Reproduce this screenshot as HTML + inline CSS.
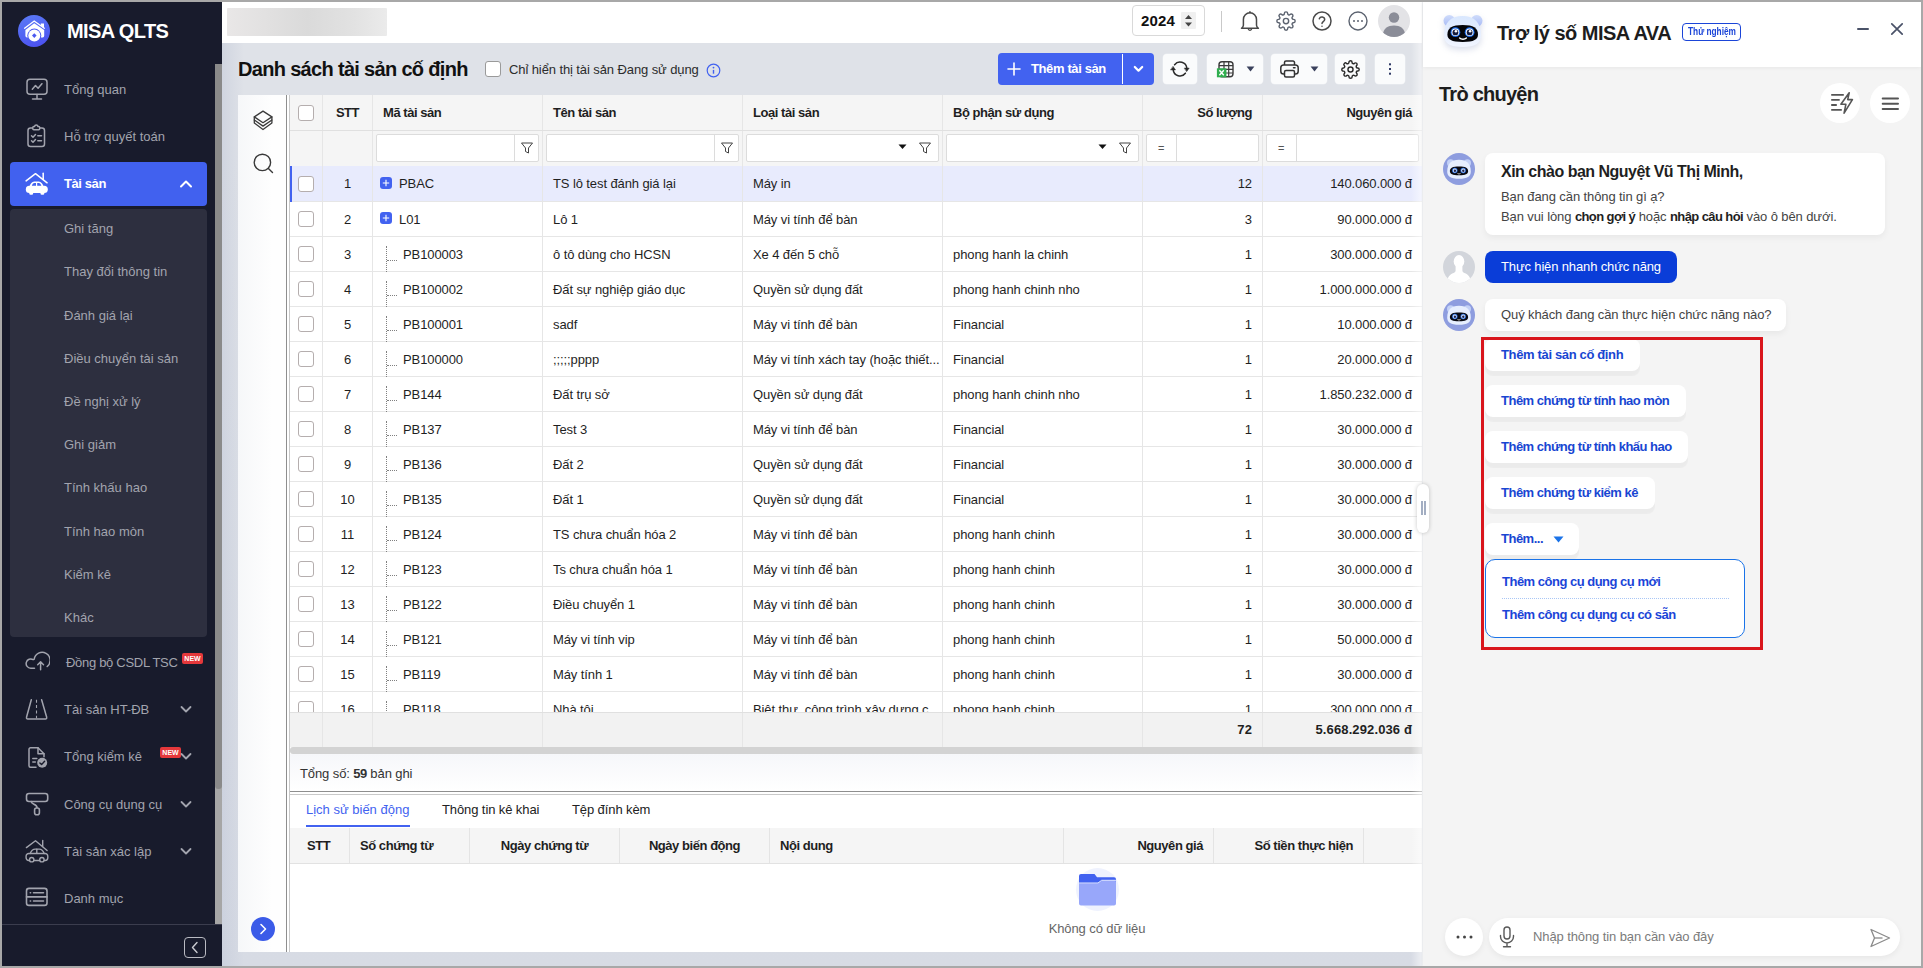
<!DOCTYPE html>
<html lang="vi">
<head>
<meta charset="utf-8">
<title>MISA QLTS - Danh sách tài sản cố định</title>
<style>
*{box-sizing:border-box;margin:0;padding:0}
html,body{width:1923px;height:968px;overflow:hidden;background:#a8a8a8}
body{font-family:"Liberation Sans",sans-serif;font-size:13px;color:#1f1f1f;position:relative;letter-spacing:-0.1px}
b,.bd{font-weight:bold;letter-spacing:-0.45px}
#app{position:absolute;left:2px;top:2px;width:1919px;height:964px;overflow:hidden;background:#dfe2e8}
.abs{position:absolute}
svg{display:block}
/* ---------- sidebar ---------- */
#sb{position:absolute;left:0;top:0;width:220px;height:964px;background:#181b2c}
#sb .logo{position:absolute;left:16px;top:13px;width:32px;height:32px;border-radius:50%;background:linear-gradient(160deg,#5b7cf6 0%,#4a4df0 100%)}
#sb .brand{position:absolute;left:65px;top:17px;font-size:20px;font-weight:bold;color:#fff;line-height:24px;letter-spacing:-0.6px}
#sb .mi{position:absolute;left:8px;width:197px;height:44px;border-radius:4px;color:#a2a4ae;font-size:13px;line-height:46px;letter-spacing:0}
#sb .mi .ic{position:absolute;left:14px;top:9px;width:26px;height:26px}
#sb .mi .tx{position:absolute;left:54px;top:0;white-space:nowrap}
#sb .mi .ar{position:absolute;left:169px;top:15px}
#sb .mi.act{background:#4161ef;color:#fff;font-weight:bold;letter-spacing:-0.4px;line-height:44px}
#sb .sub{position:absolute;left:8px;top:207px;width:197px;height:428px;background:#2d2f3f;border-radius:4px}
#sb .sub div{position:absolute;left:54px;color:#a2a4ae;font-size:13px;line-height:20px;white-space:nowrap;letter-spacing:0}
#sb .new{position:absolute;background:#e5383b;color:#fff;font-size:7px;font-weight:bold;line-height:11px;height:11px;width:21px;text-align:center;border-radius:2px;letter-spacing:0}
#sb .scr{position:absolute;left:213px;top:62px;width:7px;height:860px;background:#8a8a8a}
#sb .foot{position:absolute;left:0;top:920px;width:220px;height:44px;border-top:1px solid #3b3d4e}
/* ---------- top header ---------- */
#hd{position:absolute;left:220px;top:0;width:1200px;height:41px;background:#fff}
#hd .blur{position:absolute;left:5px;top:6px;width:160px;height:28px;background:linear-gradient(90deg,#e9e7e7,#dadada 50%,#e2e2e2 80%,#ebebeb);border-radius:1px}
#hd .yr{position:absolute;left:910px;top:3px;width:73px;height:31px;border:1px solid #d9d9d9;border-radius:4px;background:#fff}
#hd .yr b{position:absolute;left:8px;top:0;line-height:30px;font-size:15px;color:#111;letter-spacing:0.15px}
#hd .yr .sp{position:absolute;left:48px;top:6px;width:15px;height:17px;background:#f0f0f0;border-radius:1px}
#hd .sep{position:absolute;left:999px;top:9px;width:1px;height:21px;background:#c9c9c9}
#hd .av{position:absolute;left:1156px;top:3px;width:32px;height:32px;border-radius:50%;background:#e3e3e6;overflow:hidden}
/* ---------- page toolbar ---------- */
#pg{position:absolute;left:220px;top:41px;width:1200px;height:923px;background:linear-gradient(90deg,rgba(190,197,214,.45) 0,rgba(190,197,214,0) 22px),linear-gradient(180deg,#dfe2e8 0,#dfe2e8 12%,#d7dbe4 100%)}
.ttl{position:absolute;left:236px;top:55px;font-size:20px;font-weight:bold;line-height:24px;color:#111;white-space:nowrap;letter-spacing:-0.68px}
.cbx{position:absolute;width:16px;height:16px;border:1px solid #9a9a9a;border-radius:3px;background:#fff}
.btn{position:absolute;top:52px;height:30px;background:#fafbfc;border-radius:4px;box-shadow:0 0 0 .500px #eceef2}
.bprim{position:absolute;left:996px;top:51px;width:156px;height:32px;background:#4262f0;border-radius:4px;color:#fff;font-weight:bold;font-size:13px;letter-spacing:-0.38px}
/* ---------- grid ---------- */
#gridwrap{position:absolute;left:236px;top:93px;width:1184px;height:857px;background:#fff}
#lp{position:absolute;left:0;top:0;width:48px;height:857px;background:linear-gradient(90deg,#f6f7f9,#fefefe 70%)}
#split{position:absolute;left:48px;top:0;width:4px;height:857px;border-left:1px solid #8e8e8e;border-right:1px solid #c9c9c9;background:#fff}
#grid{position:absolute;left:52px;top:0;width:1132px;height:857px;background:#fff;overflow:hidden}
.hdr{position:absolute;left:0;top:0;width:1132px;height:36px;background:#f5f5f5;border-bottom:1px solid #e0e0e0;font-weight:bold;color:#1f1f1f;letter-spacing:-0.45px}
.flt{position:absolute;left:0;top:36px;width:1132px;height:36px;background:#f5f5f5}
#rows{position:absolute;left:0;top:71px;width:1132px;height:546px;overflow:hidden;background:#fff}
.r{position:absolute;left:0;width:1132px;height:35px;border-bottom:1px solid #e6e6e6;background:#fff}
.r.sel{background:#e8ebfd;height:36px}
.r.sel .c{top:0;height:36px}
.r.sel .cb{top:10px}
.r.sel .pl{top:11px}
.selbar{position:absolute;left:0;top:0;width:2px;height:36px;background:#4262f0;z-index:2}
.c{position:absolute;top:0;height:35px;line-height:36px;white-space:nowrap;overflow:hidden;border-right:1px solid #e6e6e6;padding:0 10px;color:#1f1f1f}
.c0{left:0;width:33px;padding:0}
.c1{left:33px;width:50px;text-align:center;padding:0}
.c2{left:83px;width:170px}
.c3{left:253px;width:200px}
.c4{left:453px;width:200px}
.c5{left:653px;width:200px}
.c6{left:853px;width:120px;text-align:right}
.c7{left:973px;width:159px;text-align:right;border-right:0}
.cb{position:absolute;left:8px;top:9px;width:16px;height:16px;border:1px solid #b5aeae;border-radius:3px;background:#fff}
.pl{position:absolute;left:7px;top:10px;width:12px;height:12px}
.mp{position:absolute;left:26px;top:0}
.mc{position:absolute;left:30px;top:0}
.tl{position:absolute;left:13px;top:9px;width:10px;height:26px;border-left:1px dotted #808080}
.tl:after{content:"";position:absolute;left:0;top:14px;width:10px;height:0;border-top:1px dotted #808080}
.sum .c{line-height:34px;height:34px}
.fi{position:absolute;top:5px;height:26px;border:1px solid #dcdcdc;border-radius:2px;background:#fff}
/* ---------- chat ---------- */
#chat{position:absolute;left:1421px;top:0;width:498px;height:964px;background:#f4f4f4;box-shadow:-1px 0 2px rgba(0,0,0,.04)}
#glow{position:absolute;left:1409px;top:0;width:12px;height:964px;background:linear-gradient(90deg,rgba(255,255,255,0),rgba(255,255,255,.6))}
#chat .top{position:absolute;left:0;top:0;width:498px;height:65px;background:#fff;box-shadow:0 1px 4px rgba(0,0,0,.06)}
#chat .bub{position:absolute;background:#fff;border-radius:8px;box-shadow:0 3px 6px rgba(0,0,0,.05)}
#chat .chip{position:absolute;left:62px;height:32px;background:#fff;border-radius:8px;box-shadow:0 5px 1px rgba(0,0,0,.035);color:#1846d2;font-weight:bold;font-size:13px;line-height:31px;padding:0 16px;white-space:nowrap;letter-spacing:-0.5px}
#chat .circ{position:absolute;border-radius:50%;background:#fff}
</style>
</head>
<body>
<div id="app">
<!-- ================= SIDEBAR ================= -->
<div id="sb">
  <div class="logo">
    <svg width="32" height="32" viewBox="0 0 32 32">
      <path d="M6.600 13.200 16.200 6 26.300 13.200" fill="none" stroke="#fff" stroke-width="1.400" stroke-linecap="round" stroke-linejoin="miter"/>
      <path d="M22.800 8.600h3.200v4.300l-3.200-2.300z" fill="#fff"/>
      <path d="M7.400 14.900 16.200 8.300 26.200 14.900V20.800q0 1.600-1.600 1.600H9q-1.600 0-1.600-1.600z" fill="#fff"/>
      <circle cx="16.300" cy="20.600" r="7" fill="#4c5af0"/>
      <circle cx="16.300" cy="20.600" r="6" fill="#fff"/>
      <path d="M16.300 18.300l2.300 2.300-2.300 2.300-2.300-2.300z" fill="#4c5af0"/>
    </svg>
  </div>
  <div class="brand">MISA QLTS</div>

  <div class="mi" style="top:65px">
    <span class="ic"><svg width="26" height="26" viewBox="0 0 26 26" fill="none" stroke="#a2a4ae" stroke-width="1.500" stroke-linecap="round" stroke-linejoin="round"><rect x="3" y="3.300" width="20" height="15" rx="3"/><path d="M13 18.500v4.200M8.500 22.900h9M8.300 13.300l3.200-3.800 2.600 2.800 3.800-4.600"/></svg></span>
    <span class="tx">Tổng quan</span>
  </div>
  <div class="mi" style="top:112px">
    <span class="ic"><svg width="26" height="26" viewBox="0 0 26 26" fill="none" stroke="#a2a4ae" stroke-width="1.500" stroke-linecap="round" stroke-linejoin="round"><rect x="4" y="5" width="16.500" height="18.500" rx="2.500"/><path d="M8.800 5V4.500a1 1 0 0 1 1-1h.700a1.800 1.800 0 0 1 3.500 0h.700a1 1 0 0 1 1 1V5.800a1 1 0 0 1-1 1H9.800a1 1 0 0 1-1-1z" fill="#181b2c"/><path d="M7.500 12.800l1.500 1.500 2.500-2.800M13.800 12.800h3.700M7.500 17.800l1.500 1.500 2.500-2.800M13.800 17.800h3.700"/></svg></span>
    <span class="tx">Hỗ trợ quyết toán</span>
  </div>
  <div class="mi act" style="top:160px">
    <span class="ic"><svg width="26" height="26" viewBox="0 0 26 26"><path d="M2.100 9.900 11.500 2.700 23.100 11.800" fill="none" stroke="#fff" stroke-width="1.500" stroke-linecap="round" stroke-linejoin="round"/><path d="M19.200 2.200v6.300" stroke="#fff" stroke-width="1.500" stroke-linecap="round"/><path d="M5.200 16.500c.800-3.600 2.600-6 5.100-6h4.400c2.500 0 4.300 2.400 5.100 6z" fill="#fff"/><rect x="1.800" y="14.800" width="22" height="7.300" rx="3.600" fill="#fff"/><rect x="5.300" y="20.500" width="3.800" height="3.200" rx="1.200" fill="#fff"/><rect x="16.500" y="20.500" width="3.800" height="3.200" rx="1.200" fill="#fff"/><path d="M7.800 14.800c.500-1.700 1.400-2.900 2.700-2.900h1.500v2.900zM13.200 11.900h1.500c1.300 0 2.200 1.200 2.700 2.900h-4.200z" fill="#4161ef"/></svg></span>
    <span class="tx">Tài sản</span>
    <span class="ar"><svg width="14" height="14" viewBox="0 0 14 14" fill="none" stroke="#fff" stroke-width="2" stroke-linecap="round" stroke-linejoin="round"><path d="M2 9.500l5-5 5 5"/></svg></span>
  </div>
  <div class="sub">
    <div style="top:10px">Ghi tăng</div>
    <div style="top:53px">Thay đổi thông tin</div>
    <div style="top:97px">Đánh giá lại</div>
    <div style="top:140px">Điều chuyển tài sản</div>
    <div style="top:183px">Đề nghị xử lý</div>
    <div style="top:226px">Ghi giảm</div>
    <div style="top:269px">Tính khấu hao</div>
    <div style="top:313px">Tính hao mòn</div>
    <div style="top:356px">Kiểm kê</div>
    <div style="top:399px">Khác</div>
  </div>

  <div class="mi" style="top:638px">
    <span class="ic"><svg width="26" height="26" viewBox="0 0 26 26" fill="none" stroke="#a2a4ae" stroke-width="1.500" stroke-linecap="round" stroke-linejoin="round"><path d="M10.500 19.200H6.800a4.600 4.600 0 1 1 2.400-8.500M10.200 10.200a8 8 0 1 1 13 7.300"/><path d="M16.600 20.800v-7.800M13.700 15.700l2.900-2.900 2.900 2.900"/></svg></span>
    <span class="tx" style="left:56px;letter-spacing:-0.3px">Đồng bộ CSDL TSC</span>
    <span class="new" style="left:172px;top:13px">NEW</span>
  </div>
  <div class="mi" style="top:685px">
    <span class="ic"><svg width="26" height="26" viewBox="0 0 26 26" fill="none" stroke="#a2a4ae" stroke-width="1.500" stroke-linecap="round" stroke-linejoin="round"><path d="M7.300 3.800 2.500 21.300a1.300 1.300 0 0 0 1.300 1.700h17.600a1.300 1.300 0 0 0 1.300-1.700L17.600 3.800"/><path d="M12.500 3.800v18.500" stroke-width="1.100" stroke-dasharray="3 2.300" stroke-linecap="butt"/></svg></span>
    <span class="tx">Tài sản HT-ĐB</span>
    <span class="ar"><svg width="14" height="14" viewBox="0 0 14 14" fill="none" stroke="#a2a4ae" stroke-width="1.800" stroke-linecap="round" stroke-linejoin="round"><path d="M2.500 5l4.500 4.500L11.500 5"/></svg></span>
  </div>
  <div class="mi" style="top:732px">
    <span class="ic" style="top:10px"><svg width="26" height="26" viewBox="0 0 26 26" fill="none" stroke="#a2a4ae" stroke-width="1.500" stroke-linecap="round" stroke-linejoin="round"><path d="M12 23.300H6.500A1.500 1.500 0 0 1 5 21.800V5.300A1.500 1.500 0 0 1 6.500 3.800H14l6 6v3"/><path d="M14 3.800v6h6" /><path d="M8.800 14.600h4M8.800 18h2.500"/><circle cx="18.200" cy="18.800" r="5" fill="#a2a4ae" stroke="none"/><path d="M15.900 18.900l1.700 1.700 3-3.300" stroke="#181b2c" stroke-width="1.400"/></svg></span>
    <span class="tx">Tổng kiểm kê</span>
    <span class="new" style="left:150px;top:13px">NEW</span>
    <span class="ar"><svg width="14" height="14" viewBox="0 0 14 14" fill="none" stroke="#a2a4ae" stroke-width="1.800" stroke-linecap="round" stroke-linejoin="round"><path d="M2.500 5l4.500 4.500L11.500 5"/></svg></span>
  </div>
  <div class="mi" style="top:780px">
    <span class="ic"><svg width="26" height="26" viewBox="0 0 26 26" fill="none" stroke="#a2a4ae" stroke-width="1.600" stroke-linecap="round" stroke-linejoin="round"><rect x="2.500" y="2.500" width="21.200" height="8" rx="2.500"/><path d="M7.200 10.500c0 3 5.800 2.500 5.800 6"/><rect x="10.600" y="17" width="4.800" height="6.800" rx="2"/></svg></span>
    <span class="tx">Công cụ dụng cụ</span>
    <span class="ar"><svg width="14" height="14" viewBox="0 0 14 14" fill="none" stroke="#a2a4ae" stroke-width="1.800" stroke-linecap="round" stroke-linejoin="round"><path d="M2.500 5l4.500 4.500L11.500 5"/></svg></span>
  </div>
  <div class="mi" style="top:827px">
    <span class="ic"><svg width="26" height="26" viewBox="0 0 26 26" fill="none" stroke="#a2a4ae" stroke-width="1.400" stroke-linecap="round" stroke-linejoin="round"><path d="M2.400 9.600 11.500 2.700 23.100 12.500"/><path d="M18.700 2.400v6.200"/><path d="M6.200 15.500c1-2.700 2.800-4.400 5-4.400h4c2.200 0 4 1.700 5 4.400"/><path d="M5.500 22.500H4.800a2.700 2.700 0 0 1-2.700-2.700v-1.600a2.700 2.700 0 0 1 2.700-2.700h16.300a2.700 2.700 0 0 1 2.700 2.700v1.600a2.700 2.700 0 0 1-2.700 2.700h-.7M10 22.500h5.600"/><circle cx="7.700" cy="21.700" r="2.200"/><circle cx="17.900" cy="21.700" r="2.200"/><path d="M12.800 11.300v4"/></svg></span>
    <span class="tx">Tài sản xác lập</span>
    <span class="ar"><svg width="14" height="14" viewBox="0 0 14 14" fill="none" stroke="#a2a4ae" stroke-width="1.800" stroke-linecap="round" stroke-linejoin="round"><path d="M2.500 5l4.500 4.500L11.500 5"/></svg></span>
  </div>
  <div class="mi" style="top:874px">
    <span class="ic"><svg width="26" height="26" viewBox="0 0 26 26" fill="none" stroke="#a2a4ae" stroke-width="1.600" stroke-linecap="round" stroke-linejoin="round"><rect x="2.500" y="3.400" width="20.500" height="17" rx="2.500"/><path d="M2.500 11.900h20.500M9.500 7.700h10M9.500 16h10M6.300 7.700h.300M6.300 16h.300"/></svg></span>
    <span class="tx">Danh mục</span>
  </div>

  <div class="scr" style="background:#a6a6a6"></div>
  <div class="scr" style="height:725px;border-radius:0 0 4px 4px"></div>
  <div class="foot" style="background:#181b2c;top:922px;height:42px">
    <div class="abs" style="left:182px;top:12px;width:22px;height:21px;border:1px solid #b9bac2;border-radius:4px">
      <svg width="20" height="19" viewBox="0 0 20 19" fill="none" stroke="#c9cad0" stroke-width="1.400" stroke-linecap="round" stroke-linejoin="round"><path d="M12 4.500 7.500 9.500l4.500 5"/></svg>
    </div>
  </div>
</div>
<!-- ================= TOP HEADER ================= -->
<div id="hd">
  <div class="blur"></div>
  <div class="yr"><b>2024</b><span class="sp"><svg width="15" height="17" viewBox="0 0 15 17"><path d="M4 7l3.500-4 3.500 4zM4 10.500l3.500 4 3.500-4z" fill="#444"/></svg></span></div>
  <div class="sep"></div>
  <!-- bell -->
  <div class="abs" style="left:1017px;top:8px"><svg width="22" height="24" viewBox="0 0 22 24" fill="none" stroke="#484848" stroke-width="1.500" stroke-linecap="round" stroke-linejoin="round"><path d="M4.400 15.300V9.400a6.550 6.550 0 0 1 13.100 0v5.900c0 1.500.900 2.200 1.900 3H2.500c1-.800 1.900-1.500 1.900-3z"/><path d="M9.400 19.300a1.700 1.700 0 0 0 3.100 0" stroke-width="1.300"/><path d="M10.950 1.800v1"/></svg></div>
  <!-- gear -->
  <div class="abs" style="left:1054px;top:9px"><svg width="20" height="20" viewBox="0 0 24 24" fill="none" stroke="#5c6370" stroke-width="1.700" stroke-linecap="round" stroke-linejoin="round"><circle cx="12" cy="12" r="3.200"/><path d="M19.400 15a1.650 1.650 0 0 0 .330 1.820l.060.060a2 2 0 1 1-2.830 2.830l-.060-.060a1.650 1.650 0 0 0-1.820-.330 1.650 1.650 0 0 0-1 1.510V21a2 2 0 0 1-4 0v-.090A1.650 1.650 0 0 0 9 19.400a1.650 1.650 0 0 0-1.820.330l-.060.060a2 2 0 1 1-2.830-2.830l.060-.060a1.650 1.650 0 0 0 .330-1.820 1.650 1.650 0 0 0-1.510-1H3a2 2 0 0 1 0-4h.090A1.650 1.650 0 0 0 4.600 9a1.650 1.650 0 0 0-.330-1.820l-.060-.060a2 2 0 1 1 2.830-2.830l.060.060a1.650 1.650 0 0 0 1.820.330H9a1.650 1.650 0 0 0 1-1.510V3a2 2 0 0 1 4 0v.090a1.650 1.650 0 0 0 1 1.510 1.650 1.650 0 0 0 1.820-.330l.060-.060a2 2 0 1 1 2.830 2.830l-.060.060a1.650 1.650 0 0 0-.330 1.820V9a1.650 1.650 0 0 0 1.510 1H21a2 2 0 0 1 0 4h-.090a1.650 1.650 0 0 0-1.510 1z"/></svg></div>
  <!-- help -->
  <div class="abs" style="left:1089px;top:8px"><svg width="22" height="22" viewBox="0 0 22 22" fill="none" stroke="#4a4a4a" stroke-width="1.500" stroke-linecap="round" stroke-linejoin="round"><circle cx="11" cy="11" r="9"/><path d="M8.300 8.700a2.800 2.800 0 0 1 5.400.900c0 1.800-2.700 2.300-2.700 3.800M11 16.200v.100"/></svg></div>
  <!-- more -->
  <div class="abs" style="left:1125px;top:8px"><svg width="22" height="22" viewBox="0 0 22 22" fill="none" stroke="#5c6370" stroke-width="1.400"><circle cx="11" cy="11" r="9"/><g fill="#5c6370" stroke="none"><circle cx="7" cy="11" r="1"/><circle cx="11" cy="11" r="1"/><circle cx="15" cy="11" r="1"/></g></svg></div>
  <div class="av"><svg width="32" height="32" viewBox="0 0 32 32"><circle cx="16" cy="12.500" r="5.200" fill="#8b8d98"/><path d="M5 30c0-6.500 4.800-9.500 11-9.500s11 3 11 9.500v3H5z" fill="#8b8d98"/></svg></div>
</div>

<!-- ================= PAGE AREA ================= -->
<div id="pg"></div>
<div class="ttl">Danh sách tài sản cố định</div>
<div class="cbx" style="left:483px;top:59px"></div>
<div class="abs" style="left:507px;top:60px;line-height:16px;color:#2c2c2c;white-space:nowrap">Chỉ hiển thị tài sản Đang sử dụng</div>
<div class="abs" style="left:703.500px;top:60.500px"><svg width="15" height="15" viewBox="0 0 15 15" fill="none" stroke="#4262f0" stroke-width="1.200"><circle cx="7.500" cy="7.500" r="6.300"/><path d="M7.500 6.900v3.800" stroke-width="1.400" stroke-linecap="butt"/><circle cx="7.500" cy="4.600" r=".900" fill="#4262f0" stroke="none"/></svg></div>

<div class="bprim">
  <svg class="abs" style="left:9px;top:9px" width="14" height="14" viewBox="0 0 14 14" stroke="#fff" stroke-width="1.600" stroke-linecap="round"><path d="M7 1v12M1 7h12"/></svg>
  <span class="abs" style="left:33px;top:0;line-height:32px;white-space:nowrap">Thêm tài sản</span>
  <i class="abs" style="left:124px;top:1px;width:1px;height:30px;background:#fff"></i>
  <svg class="abs" style="left:135px;top:10.500px" width="11" height="10" viewBox="0 0 11 10" fill="none" stroke="#fff" stroke-width="2.200" stroke-linecap="round" stroke-linejoin="round"><path d="M1.800 3l3.700 3.700L9.200 3"/></svg>
</div>
<!-- refresh -->
<div class="btn" style="left:1161px;width:34px"><svg class="abs" style="left:7px;top:5px" width="20" height="20" viewBox="0 0 20 20" fill="none" stroke="#2a2a2a" stroke-width="1.500" stroke-linecap="round" stroke-linejoin="round"><path d="M4.600 5.800a6.800 6.800 0 0 1 12.200 3.400"/><path d="M15.400 14.200a6.800 6.800 0 0 1-12.200-3.400"/><path d="M14.500 9.100h4.700l-2.400 3.300z" fill="#2a2a2a" stroke-width=".500"/><path d="M.800 10.900h4.700L3.200 7.600z" fill="#2a2a2a" stroke-width=".500"/></svg></div>
<!-- excel -->
<div class="btn" style="left:1205px;width:56px">
  <svg class="abs" style="left:9px;top:5px" width="20" height="20" viewBox="0 0 20 20" fill="none"><rect x="3" y="2.700" width="14" height="15" rx="3" stroke="#3a3a3a" stroke-width="1.400"/><path d="M3 6.600h14M3 10.300h14M3 14h14M8 2.700v15M12.700 2.700v15" stroke="#3a3a3a" stroke-width="1.200"/><rect x=".900" y="9.300" width="9.500" height="9" fill="#2fae4e"/><path d="M3.400 11.300l4.400 5M7.800 11.300l-4.400 5" stroke="#fff" stroke-width="1.400"/></svg>
  <svg class="abs" style="left:39px;top:12px" width="9" height="6" viewBox="0 0 9 6"><path d="M.600 .600h7.800L4.500 5.400z" fill="#3a415c"/></svg>
</div>
<!-- print -->
<div class="btn" style="left:1269px;width:56px">
  <svg class="abs" style="left:8px;top:5px" width="21" height="20" viewBox="0 0 21 20" fill="none" stroke="#333" stroke-width="1.500" stroke-linejoin="round"><path d="M5.500 6V3.500a1.500 1.500 0 0 1 1.500-1.500h7a1.500 1.500 0 0 1 1.500 1.500V6"/><rect x="1.800" y="6" width="17.400" height="9" rx="2.800"/><rect x="5.500" y="11.500" width="10" height="6.500" rx="1.500" fill="#fafbfc"/><path d="M14.500 8.800h1.500" stroke-linecap="round"/></svg>
  <svg class="abs" style="left:39px;top:12px" width="9" height="6" viewBox="0 0 9 6"><path d="M.600 .600h7.800L4.500 5.400z" fill="#3a415c"/></svg>
</div>
<!-- gear -->
<div class="btn" style="left:1333px;width:30px"><svg class="abs" style="left:5.500px;top:5.800px" width="19" height="19" viewBox="0 0 24 24" fill="none" stroke="#2a2a2a" stroke-width="1.800" stroke-linecap="round" stroke-linejoin="round"><circle cx="12" cy="12" r="3.200"/><path d="M19.400 15a1.650 1.650 0 0 0 .330 1.820l.060.060a2 2 0 1 1-2.830 2.830l-.060-.060a1.650 1.650 0 0 0-1.820-.330 1.650 1.650 0 0 0-1 1.510V21a2 2 0 0 1-4 0v-.090A1.650 1.650 0 0 0 9 19.400a1.650 1.650 0 0 0-1.820.330l-.060.060a2 2 0 1 1-2.830-2.830l.060-.060a1.650 1.650 0 0 0 .330-1.820 1.650 1.650 0 0 0-1.510-1H3a2 2 0 0 1 0-4h.090A1.650 1.650 0 0 0 4.600 9a1.650 1.650 0 0 0-.330-1.820l-.060-.060a2 2 0 1 1 2.830-2.830l.060.060a1.650 1.650 0 0 0 1.820.330H9a1.650 1.650 0 0 0 1-1.510V3a2 2 0 0 1 4 0v.090a1.650 1.650 0 0 0 1 1.510 1.650 1.650 0 0 0 1.820-.330l.060-.060a2 2 0 1 1 2.830 2.830l-.060.060a1.650 1.650 0 0 0-.330 1.820V9a1.650 1.650 0 0 0 1.510 1H21a2 2 0 0 1 0 4h-.090a1.650 1.650 0 0 0-1.510 1z"/></svg></div>
<!-- more vertical -->
<div class="btn" style="left:1373px;width:30px"><svg class="abs" style="left:13px;top:7px" width="4" height="16" viewBox="0 0 4 16" fill="#2f3a66"><rect x="1" y="2.300" width="2" height="2"/><rect x="1" y="7" width="2" height="2"/><rect x="1" y="11.700" width="2" height="2"/></svg></div>

<!-- ================= GRID ================= -->
<div id="gridwrap">
<div id="lp">
  <svg class="abs" style="left:14px;top:14px" width="22" height="22" viewBox="0 0 22 22" fill="none" stroke="#3a3a3a" stroke-width="1.300" stroke-linejoin="round" stroke-linecap="round"><path d="M11 2.100 19.900 7.900 11 13.700 2.300 7.900z"/><path d="M2.300 7.900V14L11 20.500l8.900-6.500V7.900"/><path d="M2.300 11 11 17.100l8.900-6.100"/></svg>
  <svg class="abs" style="left:14px;top:57px" width="22" height="22" viewBox="0 0 22 22" fill="none" stroke="#3a3a3a" stroke-width="1.400" stroke-linecap="round"><circle cx="10.400" cy="10.400" r="8.200"/><path d="M16.400 16.400l4.100 4.100"/></svg>
  <div class="abs" style="left:13px;top:822px;width:24px;height:24px;border-radius:50%;background:#3b5be8"><svg width="24" height="24" viewBox="0 0 24 24" fill="none" stroke="#fff" stroke-width="1.600" stroke-linecap="round" stroke-linejoin="round"><path d="M10 7.500l4.500 4.500-4.500 4.500"/></svg></div>
</div>
<div id="split"></div>
<div id="grid">
<div class="hdr">
  <div class="c c0" style="height:35px"><i class="cb" style="top:10px"></i></div>
  <div class="c c1" style="height:35px">STT</div>
  <div class="c c2" style="height:35px">Mã tài sản</div>
  <div class="c c3" style="height:35px">Tên tài sản</div>
  <div class="c c4" style="height:35px">Loại tài sản</div>
  <div class="c c5" style="height:35px">Bộ phận sử dụng</div>
  <div class="c c6" style="height:35px">Số lượng</div>
  <div class="c c7" style="height:35px">Nguyên giá</div>
</div>
<div class="flt">
  <div class="c c0"></div><div class="c c1"></div>
  <div class="c c2" style="padding:0"><div class="fi" style="left:3px;top:3px;width:163px;height:28px"><i class="abs" style="left:137px;top:0;width:1px;height:26px;background:#dcdcdc"></i><svg class="abs" style="left:143px;top:6px" width="14" height="14" viewBox="0 0 14 14" fill="none" stroke="#444" stroke-width="1" stroke-linejoin="round"><path d="M1.500 2h11L8.500 7v5l-3-1.500V7z"/></svg></div></div>
  <div class="c c3" style="padding:0"><div class="fi" style="left:3px;top:3px;width:193px;height:28px"><i class="abs" style="left:167px;top:0;width:1px;height:26px;background:#dcdcdc"></i><svg class="abs" style="left:173px;top:6px" width="14" height="14" viewBox="0 0 14 14" fill="none" stroke="#444" stroke-width="1" stroke-linejoin="round"><path d="M1.500 2h11L8.500 7v5l-3-1.500V7z"/></svg></div></div>
  <div class="c c4" style="padding:0"><div class="fi" style="left:3px;top:3px;width:193px;height:28px"><svg class="abs" style="left:151px;top:9px" width="9" height="6" viewBox="0 0 9 6"><path d="M.500 .500h8L4.500 5z" fill="#111"/></svg><svg class="abs" style="left:171px;top:6px" width="14" height="14" viewBox="0 0 14 14" fill="none" stroke="#444" stroke-width="1" stroke-linejoin="round"><path d="M1.500 2h11L8.500 7v5l-3-1.500V7z"/></svg></div></div>
  <div class="c c5" style="padding:0"><div class="fi" style="left:3px;top:3px;width:193px;height:28px"><svg class="abs" style="left:151px;top:9px" width="9" height="6" viewBox="0 0 9 6"><path d="M.500 .500h8L4.500 5z" fill="#111"/></svg><svg class="abs" style="left:171px;top:6px" width="14" height="14" viewBox="0 0 14 14" fill="none" stroke="#444" stroke-width="1" stroke-linejoin="round"><path d="M1.500 2h11L8.500 7v5l-3-1.500V7z"/></svg></div></div>
  <div class="c c6" style="padding:0"><div class="fi" style="left:3px;top:3px;width:113px;height:28px"><span class="abs" style="left:11px;top:1px;line-height:24px;font-size:11px;color:#555">=</span><i class="abs" style="left:29px;top:0;width:1px;height:26px;background:#dcdcdc"></i></div></div>
  <div class="c c7" style="padding:0"><div class="fi" style="left:3px;top:3px;width:153px;height:28px"><span class="abs" style="left:11px;top:1px;line-height:24px;font-size:11px;color:#555">=</span><i class="abs" style="left:29px;top:0;width:1px;height:26px;background:#dcdcdc"></i></div></div>
</div>
<div id="rows">
<div class="r sel" style="top:0px"><i class="selbar"></i><div class="c c0"><i class="cb"></i></div><div class="c c1">1</div><div class="c c2"><i class="pl"><svg width="12" height="12" viewBox="0 0 12 12"><rect width="12" height="12" rx="3" fill="#4262f0"/><path d="M6 2.800v6.400M2.800 6h6.400" stroke="#fff" stroke-width="1.100"/></svg></i><span class="mp">PBAC</span></div><div class="c c3">TS lô test đánh giá lại</div><div class="c c4">Máy in</div><div class="c c5"></div><div class="c c6">12</div><div class="c c7">140.060.000 đ</div></div>
<div class="r" style="top:36px"><div class="c c0"><i class="cb"></i></div><div class="c c1">2</div><div class="c c2"><i class="pl"><svg width="12" height="12" viewBox="0 0 12 12"><rect width="12" height="12" rx="3" fill="#4262f0"/><path d="M6 2.800v6.400M2.800 6h6.400" stroke="#fff" stroke-width="1.100"/></svg></i><span class="mp">L01</span></div><div class="c c3">Lô 1</div><div class="c c4">Máy vi tính để bàn</div><div class="c c5"></div><div class="c c6">3</div><div class="c c7">90.000.000 đ</div></div>
<div class="r" style="top:71px"><div class="c c0"><i class="cb"></i></div><div class="c c1">3</div><div class="c c2"><i class="tl"></i><span class="mc">PB100003</span></div><div class="c c3">ô tô dùng cho HCSN</div><div class="c c4">Xe 4 đến 5 chỗ</div><div class="c c5">phong hanh la chinh</div><div class="c c6">1</div><div class="c c7">300.000.000 đ</div></div>
<div class="r" style="top:106px"><div class="c c0"><i class="cb"></i></div><div class="c c1">4</div><div class="c c2"><i class="tl"></i><span class="mc">PB100002</span></div><div class="c c3">Đất sự nghiệp giáo dục</div><div class="c c4">Quyền sử dụng đất</div><div class="c c5">phong hanh chinh nho</div><div class="c c6">1</div><div class="c c7">1.000.000.000 đ</div></div>
<div class="r" style="top:141px"><div class="c c0"><i class="cb"></i></div><div class="c c1">5</div><div class="c c2"><i class="tl"></i><span class="mc">PB100001</span></div><div class="c c3">sadf</div><div class="c c4">Máy vi tính để bàn</div><div class="c c5">Financial</div><div class="c c6">1</div><div class="c c7">10.000.000 đ</div></div>
<div class="r" style="top:176px"><div class="c c0"><i class="cb"></i></div><div class="c c1">6</div><div class="c c2"><i class="tl"></i><span class="mc">PB100000</span></div><div class="c c3">;;;;;pppp</div><div class="c c4">Máy vi tính xách tay (hoặc thiết...</div><div class="c c5">Financial</div><div class="c c6">1</div><div class="c c7">20.000.000 đ</div></div>
<div class="r" style="top:211px"><div class="c c0"><i class="cb"></i></div><div class="c c1">7</div><div class="c c2"><i class="tl"></i><span class="mc">PB144</span></div><div class="c c3">Đất trụ sở</div><div class="c c4">Quyền sử dụng đất</div><div class="c c5">phong hanh chinh nho</div><div class="c c6">1</div><div class="c c7">1.850.232.000 đ</div></div>
<div class="r" style="top:246px"><div class="c c0"><i class="cb"></i></div><div class="c c1">8</div><div class="c c2"><i class="tl"></i><span class="mc">PB137</span></div><div class="c c3">Test 3</div><div class="c c4">Máy vi tính để bàn</div><div class="c c5">Financial</div><div class="c c6">1</div><div class="c c7">30.000.000 đ</div></div>
<div class="r" style="top:281px"><div class="c c0"><i class="cb"></i></div><div class="c c1">9</div><div class="c c2"><i class="tl"></i><span class="mc">PB136</span></div><div class="c c3">Đất 2</div><div class="c c4">Quyền sử dụng đất</div><div class="c c5">Financial</div><div class="c c6">1</div><div class="c c7">30.000.000 đ</div></div>
<div class="r" style="top:316px"><div class="c c0"><i class="cb"></i></div><div class="c c1">10</div><div class="c c2"><i class="tl"></i><span class="mc">PB135</span></div><div class="c c3">Đất 1</div><div class="c c4">Quyền sử dụng đất</div><div class="c c5">Financial</div><div class="c c6">1</div><div class="c c7">30.000.000 đ</div></div>
<div class="r" style="top:351px"><div class="c c0"><i class="cb"></i></div><div class="c c1">11</div><div class="c c2"><i class="tl"></i><span class="mc">PB124</span></div><div class="c c3">TS chưa chuẩn hóa 2</div><div class="c c4">Máy vi tính để bàn</div><div class="c c5">phong hanh chinh</div><div class="c c6">1</div><div class="c c7">30.000.000 đ</div></div>
<div class="r" style="top:386px"><div class="c c0"><i class="cb"></i></div><div class="c c1">12</div><div class="c c2"><i class="tl"></i><span class="mc">PB123</span></div><div class="c c3">Ts chưa chuẩn hóa 1</div><div class="c c4">Máy vi tính để bàn</div><div class="c c5">phong hanh chinh</div><div class="c c6">1</div><div class="c c7">30.000.000 đ</div></div>
<div class="r" style="top:421px"><div class="c c0"><i class="cb"></i></div><div class="c c1">13</div><div class="c c2"><i class="tl"></i><span class="mc">PB122</span></div><div class="c c3">Điều chuyển 1</div><div class="c c4">Máy vi tính để bàn</div><div class="c c5">phong hanh chinh</div><div class="c c6">1</div><div class="c c7">30.000.000 đ</div></div>
<div class="r" style="top:456px"><div class="c c0"><i class="cb"></i></div><div class="c c1">14</div><div class="c c2"><i class="tl"></i><span class="mc">PB121</span></div><div class="c c3">Máy vi tính vip</div><div class="c c4">Máy vi tính để bàn</div><div class="c c5">phong hanh chinh</div><div class="c c6">1</div><div class="c c7">50.000.000 đ</div></div>
<div class="r" style="top:491px"><div class="c c0"><i class="cb"></i></div><div class="c c1">15</div><div class="c c2"><i class="tl"></i><span class="mc">PB119</span></div><div class="c c3">Máy tính 1</div><div class="c c4">Máy vi tính để bàn</div><div class="c c5">phong hanh chinh</div><div class="c c6">1</div><div class="c c7">30.000.000 đ</div></div>
<div class="r" style="top:526px"><div class="c c0"><i class="cb"></i></div><div class="c c1">16</div><div class="c c2"><i class="tl"></i><span class="mc">PB118</span></div><div class="c c3">Nhà tôi</div><div class="c c4">Biệt thự, công trình xây dựng c...</div><div class="c c5">phong hanh chinh</div><div class="c c6">1</div><div class="c c7">300.000.000 đ</div></div>
</div>
<!-- summary row -->
<div class="abs sum" style="left:0;top:617px;width:1132px;height:35px;background:#f2f2f2;border-top:1px solid #e0e0e0;font-weight:bold;letter-spacing:0.12px">
  <div class="c c0"></div><div class="c c1"></div><div class="c c2"></div><div class="c c3"></div><div class="c c4"></div><div class="c c5"></div>
  <div class="c c6">72</div><div class="c c7">5.668.292.036 đ</div>
</div>
<div class="abs" style="left:0;top:652px;width:1132px;height:7px;background:#d3d3d3;border-radius:3px 0 0 3px"></div>
<div class="abs" style="left:0;top:659px;width:1132px;height:37px;background:linear-gradient(180deg,#f6f7fa,#fff)"></div>
<div class="abs" style="left:10px;top:670px;line-height:18px;color:#333;white-space:nowrap">Tổng số: <b>59</b> bản ghi</div>
<div class="abs" style="left:0;top:696px;width:1132px;height:4px;border-top:1px solid #8e8e8e;border-bottom:1px solid #c9c9c9"></div>
<!-- tabs -->
<div class="abs" style="left:16px;top:706px;line-height:18px;color:#4262f0;white-space:nowrap;letter-spacing:0" id="tab1">Lịch sử biến động</div>
<div class="abs" style="left:16px;top:730px;width:104px;height:2px;background:#4262f0"></div>
<div class="abs" style="left:152px;top:706px;line-height:18px;color:#222;white-space:nowrap" id="tab2">Thông tin kê khai</div>
<div class="abs" style="left:282px;top:706px;line-height:18px;color:#222;white-space:nowrap" id="tab3">Tệp đính kèm</div>
<!-- sub table header -->
<div class="abs sh" style="left:0;top:733px;width:1132px;height:36px;background:#f5f5f5;border-bottom:1px solid #e2e2e2;font-weight:bold;line-height:35px;white-space:nowrap;letter-spacing:-0.45px">
  <div class="abs" style="left:0;width:60px;height:35px;border-right:1px solid #e4e4e4;padding-left:17px">STT</div>
  <div class="abs" style="left:60px;width:120px;height:35px;border-right:1px solid #e4e4e4;padding-left:10px">Số chứng từ</div>
  <div class="abs" style="left:180px;width:150px;height:35px;border-right:1px solid #e4e4e4;text-align:center">Ngày chứng từ</div>
  <div class="abs" style="left:330px;width:150px;height:35px;border-right:1px solid #e4e4e4;text-align:center">Ngày biến động</div>
  <div class="abs" style="left:480px;width:294px;height:35px;border-right:1px solid #e4e4e4;padding-left:10px">Nội dung</div>
  <div class="abs" style="left:774px;width:150px;height:35px;border-right:1px solid #e4e4e4;text-align:right;padding-right:10px">Nguyên giá</div>
  <div class="abs" style="left:924px;width:150px;height:35px;border-right:1px solid #e4e4e4;text-align:right;padding-right:10px">Số tiền thực hiện</div>
</div>
<!-- empty state -->
<div class="abs" style="left:786px;top:773px;width:43px;height:43px;border-radius:50%;background:#eff2fe"></div>
<svg class="abs" style="left:788px;top:778px" width="39" height="33" viewBox="0 0 39 33"><path d="M1 3a2 2 0 0 1 2-2h13.500l2.500 3.200H36a2 2 0 0 1 2 2V11H1z" fill="#4262f0"/><path d="M1 10.200h19l3.600-2.700H36.500a1.500 1.500 0 0 1 1.500 1.500V30.500a2 2 0 0 1-2 2H3a2 2 0 0 1-2-2z" fill="#98a7fa"/><path d="M1 10h19l3.600-2.700H38" fill="none" stroke="#e3e8ff" stroke-width="1"/></svg>
<div class="abs" style="left:707px;top:825px;width:200px;text-align:center;line-height:18px;color:#666;white-space:nowrap">Không có dữ liệu</div>
</div><!-- /grid -->
</div><!-- /gridwrap -->
<!-- ================= CHAT PANEL ================= -->
<div id="glow"></div>
<div id="chat">
  <div class="top">
    <!-- robot logo -->
    <svg class="abs" style="left:19px;top:9px;filter:drop-shadow(0 3px 3px rgba(90,110,170,.22))" width="42" height="42" viewBox="0 0 42 42">
      <defs><linearGradient id="ear" x1="0" y1="0" x2="0" y2="1"><stop offset="0" stop-color="#cfdcfb"/><stop offset="1" stop-color="#a9bbf5"/></linearGradient>
      <linearGradient id="hd1" x1="0" y1="0" x2="0" y2="1"><stop offset="0" stop-color="#d9e7fe"/><stop offset="1" stop-color="#f1f5ff"/></linearGradient></defs>
      <circle cx="7.300" cy="9.800" r="5.800" fill="url(#ear)"/><circle cx="34.700" cy="9.800" r="5.800" fill="url(#ear)"/>
      <path d="M2 24C2 12 8.500 5 20.500 5S39 12 39 24c0 8-5 12-18.500 12S2 32 2 24z" fill="url(#hd1)"/>
      <path d="M5.400 23.500C5.400 17 10 14 20.700 14S36 17 36 23.500c0 5-4 7.400-15.300 7.400S5.400 28.500 5.400 23.500z" fill="#040408"/>
      <circle cx="13.400" cy="21.200" r="4.900" fill="#1767e6"/><circle cx="27.600" cy="21.200" r="4.900" fill="#1767e6"/>
      <circle cx="13.400" cy="21.200" r="3.800" fill="#fff"/><circle cx="27.600" cy="21.200" r="3.800" fill="#fff"/>
      <circle cx="13.400" cy="21.400" r="2.900" fill="#141a3c"/><circle cx="27.600" cy="21.400" r="2.900" fill="#141a3c"/>
      <circle cx="13.900" cy="20.200" r="1.300" fill="#fff"/><circle cx="28.100" cy="20.200" r="1.300" fill="#fff"/>
      <path d="M17.600 27c1.700 1.700 5 1.700 6.800 0" stroke="#fff" stroke-width="1.400" fill="none" stroke-linecap="round"/>
    </svg>
    <div class="abs" id="ctitle" style="left:74px;top:17px;font-size:20px;font-weight:bold;line-height:28px;color:#1d1d1d;white-space:nowrap;letter-spacing:-0.5px">Trợ lý số MISA AVA</div>
    <div class="abs" style="left:259px;top:21px;width:59px;height:18px;border:1px solid #1b45d8;border-radius:4px;color:#1b45d8;font-size:10px;font-weight:bold;line-height:16px;white-space:nowrap;letter-spacing:0"><span style="display:inline-block;transform:scaleX(.83);transform-origin:0 50%;margin-left:5px">Thử nghiệm</span></div>
    <div class="abs" style="left:434px;top:26px;width:12px;height:2px;background:#4a5268;border-radius:1px"></div>
    <svg class="abs" style="left:467px;top:20px" width="14" height="14" viewBox="0 0 14 14" stroke="#4a5268" stroke-width="1.700" stroke-linecap="round"><path d="M1.800 1.800l10.400 10.400M12.200 1.800 1.800 12.200"/></svg>
  </div>

  <div class="abs" id="cchat" style="left:16px;top:78px;font-size:20px;font-weight:bold;line-height:28px;color:#1d1d1d;white-space:nowrap;letter-spacing:-0.75px">Trò chuyện</div>
  <div class="circ" style="left:397px;top:81px;width:40px;height:40px">
    <svg class="abs" style="left:9px;top:9px" width="26" height="24" viewBox="0 0 26 24" fill="none" stroke="#555" stroke-width="1.800" stroke-linejoin="round"><path d="M2.200 2.900h12.600M2.200 7.900h8.500M2.200 13h5.600M2.200 17.900h10.600"/><path d="M20.200 .800 11.900 12.200h5l-1.800 9 8.300-13.600h-4.700z" stroke-width="1.600"/></svg>
  </div>
  <div class="circ" style="left:447px;top:81px;width:40px;height:40px">
    <svg class="abs" style="left:11px;top:14px" width="18" height="14" viewBox="0 0 18 14" stroke="#555" stroke-width="2" stroke-linecap="round"><path d="M1.700 1.600h15.300M1.700 6.700h15.300M1.700 12h15.300"/></svg>
  </div>

  <!-- message 1 -->
  <svg class="abs" style="left:20px;top:151px" width="32" height="32" viewBox="0 0 32 32"><circle cx="16" cy="16" r="16" fill="#8e9ddf"/><circle cx="7.600" cy="9.900" r="3.600" fill="#c3d1f6"/><circle cx="24.400" cy="9.900" r="3.600" fill="#c3d1f6"/><path d="M4.200 18.500C4.200 11 8 6.800 16 6.800s11.800 4.200 11.800 11.700c0 5-3.500 7.300-11.800 7.300S4.200 23.500 4.200 18.500z" fill="#e6eefe"/><path d="M6.900 18c0-3.300 2.800-4.600 9.100-4.600s9.100 1.300 9.100 4.600c0 3-2.500 4.200-9.100 4.200S6.900 21 6.900 18z" fill="#0a0a12"/><circle cx="11.800" cy="17.500" r="2.700" fill="#2a6fe0"/><circle cx="20.200" cy="17.500" r="2.700" fill="#2a6fe0"/><circle cx="11.800" cy="17.500" r="1.900" fill="#e8eefc"/><circle cx="20.200" cy="17.500" r="1.900" fill="#e8eefc"/><circle cx="11.900" cy="17.700" r="1.200" fill="#1a2350"/><circle cx="20.300" cy="17.700" r="1.200" fill="#1a2350"/><path d="M14.800 20.600c.700.500 1.700.500 2.400 0" stroke="#fff" stroke-width=".800" fill="none" stroke-linecap="round"/></svg>
  <div class="bub" style="left:62px;top:151px;width:400px;height:82px">
    <div class="abs" id="hello" style="left:16px;top:8px;font-size:16px;font-weight:bold;line-height:22px;color:#1f1f1f;white-space:nowrap;letter-spacing:-0.5px">Xin chào bạn Nguyệt Vũ Thị Minh,</div>
    <div class="abs" id="l2" style="left:16px;top:34px;line-height:20px;color:#444;white-space:nowrap">Bạn đang cần thông tin gì ạ?</div>
    <div class="abs" id="l3" style="left:16px;top:54px;line-height:20px;color:#444;white-space:nowrap">Bạn vui lòng <b style="color:#1f1f1f;letter-spacing:-0.6px">chọn gợi ý</b> hoặc <b style="color:#1f1f1f;letter-spacing:-0.6px">nhập câu hỏi</b> vào ô bên dưới.</div>
  </div>

  <!-- user message -->
  <svg class="abs" style="left:20px;top:249px" width="32" height="32" viewBox="0 0 32 32"><defs><clipPath id="uc"><circle cx="16" cy="16" r="16"/></clipPath></defs><circle cx="16" cy="16" r="16" fill="#d2d5db"/><g clip-path="url(#uc)" fill="#fff"><ellipse cx="16" cy="10.400" rx="5.300" ry="6.300"/><path d="M12.600 14.500v5c0 1.200-.700 1.900-2 2.400C6.500 23.300 4.200 26 3.800 33h24.400c-.400-7-2.700-9.700-6.800-11.100-1.300-.500-2-1.200-2-2.400v-5z"/></g></svg>
  <div class="abs" id="ububble" style="left:62px;top:249px;width:192px;height:32px;background:#0a3dd8;border-radius:8px;color:#fff;line-height:31px;padding-left:16px;white-space:nowrap;font-size:13px;letter-spacing:-0.14px">Thực hiện nhanh chức năng</div>

  <!-- message 2 -->
  <svg class="abs" style="left:20px;top:297px" width="32" height="32" viewBox="0 0 32 32"><circle cx="16" cy="16" r="16" fill="#8e9ddf"/><circle cx="7.600" cy="9.900" r="3.600" fill="#c3d1f6"/><circle cx="24.400" cy="9.900" r="3.600" fill="#c3d1f6"/><path d="M4.200 18.500C4.200 11 8 6.800 16 6.800s11.800 4.200 11.800 11.700c0 5-3.500 7.300-11.800 7.300S4.200 23.500 4.200 18.500z" fill="#e6eefe"/><path d="M6.900 18c0-3.300 2.800-4.600 9.100-4.600s9.100 1.300 9.100 4.600c0 3-2.500 4.200-9.100 4.200S6.900 21 6.900 18z" fill="#0a0a12"/><circle cx="11.800" cy="17.500" r="2.700" fill="#2a6fe0"/><circle cx="20.200" cy="17.500" r="2.700" fill="#2a6fe0"/><circle cx="11.800" cy="17.500" r="1.900" fill="#e8eefc"/><circle cx="20.200" cy="17.500" r="1.900" fill="#e8eefc"/><circle cx="11.900" cy="17.700" r="1.200" fill="#1a2350"/><circle cx="20.300" cy="17.700" r="1.200" fill="#1a2350"/><path d="M14.800 20.600c.700.500 1.700.500 2.400 0" stroke="#fff" stroke-width=".800" fill="none" stroke-linecap="round"/></svg>
  <div class="bub" id="b2" style="left:62px;top:297px;width:301px;height:32px;line-height:31px;padding-left:16px;color:#444;white-space:nowrap">Quý khách đang cần thực hiện chức năng nào?</div>

  <!-- suggestion chips -->
  <div class="chip" style="top:337px;width:155px;letter-spacing:-0.35px">Thêm tài sản cố định</div>
  <div class="chip" style="top:383px;width:201px">Thêm chứng từ tính hao mòn</div>
  <div class="chip" style="top:429px;width:203px">Thêm chứng từ tính khấu hao</div>
  <div class="chip" style="top:475px;width:170px">Thêm chứng từ kiểm kê</div>
  <div class="chip" style="top:521px;width:94px">Thêm...<svg class="abs" style="left:68px;top:13px" width="11" height="7" viewBox="0 0 11 7"><path d="M.500 .500h10L5.500 6.500z" fill="#1a73e8"/></svg></div>
  <div class="abs" style="left:62px;top:557px;width:260px;height:79px;background:#fff;border:1px solid #1a73e8;border-radius:10px;color:#1b45d8;font-weight:bold;white-space:nowrap;letter-spacing:-0.5px">
    <div class="abs" style="left:16px;top:12px;line-height:20px">Thêm công cụ dụng cụ mới</div>
    <div class="abs" style="left:16px;top:38px;width:227px;height:0;border-top:1px dotted #a9c6f5"></div>
    <div class="abs" style="left:16px;top:45px;line-height:20px">Thêm công cụ dụng cụ có sẵn</div>
  </div>
  <!-- red highlight box -->
  <div class="abs" style="left:58px;top:335px;width:282px;height:313px;border:3px solid #d9151c"></div>

  <!-- input row -->
  <div class="circ" style="left:22px;top:916px;width:38px;height:38px;box-shadow:0 2px 6px rgba(0,0,0,.06)">
    <svg class="abs" style="left:11px;top:17px" width="17" height="4" viewBox="0 0 17 4" fill="#444"><circle cx="2" cy="2" r="1.500"/><circle cx="8.500" cy="2" r="1.500"/><circle cx="15" cy="2" r="1.500"/></svg>
  </div>
  <div class="abs" style="left:66px;top:916px;width:411px;height:38px;border-radius:19px;background:#fff;box-shadow:0 2px 6px rgba(0,0,0,.06)">
    <svg class="abs" style="left:9px;top:8px" width="18" height="22" viewBox="0 0 18 22" fill="none" stroke="#5a5a5a" stroke-width="1.400" stroke-linecap="round"><rect x="6" y="1" width="6" height="12" rx="3"/><path d="M2.500 9.500v1a6.500 6.500 0 0 0 13 0v-1M9 17v3.500M5.500 20.800h7"/></svg>
    <div class="abs" id="ph" style="left:44px;top:0;line-height:37px;color:#7b7b7b;white-space:nowrap">Nhập thông tin bạn cần vào đây</div>
    <svg class="abs" style="left:380px;top:10px" width="22" height="20" viewBox="0 0 22 20" fill="none" stroke="#8a8a8a" stroke-width="1.300" stroke-linejoin="round"><path d="M2 1.500 20.500 10 2 18.500 5.500 10z"/><path d="M5.500 10h8"/></svg>
  </div>
</div>

<!-- resizer handle -->
<div class="abs" style="left:1415px;top:482px;width:12px;height:49px;border-radius:6px;background:#fff;box-shadow:0 0 4px rgba(0,0,0,.22)">
  <i class="abs" style="left:4px;top:17px;width:2px;height:14px;background:#a3aec2"></i>
  <i class="abs" style="left:7px;top:17px;width:2px;height:14px;background:#a3aec2"></i>
</div>
</div><!-- /app -->
</body>
</html>
